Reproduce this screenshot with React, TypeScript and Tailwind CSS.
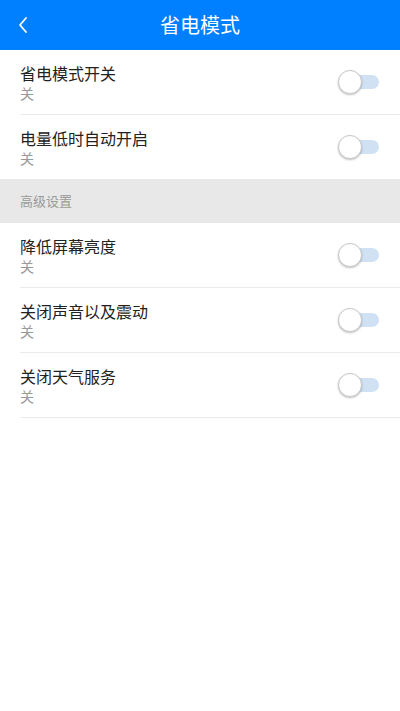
import React, { useState } from "react";

const font = { fontFamily: '"Noto Sans CJK SC", "Noto Sans", sans-serif' };

function Toggle({ on, onChange }: { on: boolean; onChange: () => void }) {
  return (
    <button type="button" onClick={onChange} className="relative w-[41px] h-[24px] mr-[21px] shrink-0">
      <span
        className={`absolute right-0 top-[5px] w-[36px] h-[14px] rounded-full ${on ? "bg-[#8cc0f5]" : "bg-[#cfe1f3]"}`}
      />
      <span
        className={`absolute top-0 w-[24px] h-[24px] rounded-full border border-[#c8c8c8] shadow-[0_1px_2px_rgba(0,0,0,0.25)] ${
          on ? "right-0 bg-[#0080ff] border-[#0080ff]" : "left-0 bg-white"
        }`}
      />
    </button>
  );
}

function Row({ title, last }: { title: string; last?: boolean }) {
  const [on, setOn] = useState(false);
  return (
    <div className={`ml-5 flex items-center ${last ? "h-[64px]" : "h-[65px] border-b border-[#ebebeb]"}`}>
      <div className="flex-1 flex flex-col">
        <div className="h-[22px] text-[16px] leading-[22px] text-[#222] overflow-hidden">{title}</div>
        <div className="h-[18px] text-[14px] leading-[18px] text-[#999] overflow-hidden">{on ? "开" : "关"}</div>
      </div>
      <Toggle on={on} onChange={() => setOn(!on)} />
    </div>
  );
}

export default function App() {
  return (
    <div className="w-[400px] h-[711px] bg-white" style={font}>
      <div className="h-[50px] bg-[#0080ff] flex items-center relative">
        <button type="button" className="w-[48px] h-[50px] flex items-center pl-[17px]">
          <svg width="12" height="18" viewBox="0 0 12 18" fill="none">
            <path d="M9 2 L3 9 L9 16" stroke="white" strokeWidth="1.8" strokeLinecap="round" strokeLinejoin="round" />
          </svg>
        </button>
        <h1 className="absolute left-1/2 -translate-x-1/2 text-white text-[20px] leading-[50px]">省电模式</h1>
      </div>

      <Row title="省电模式开关" />
      <Row title="电量低时自动开启" last />

      <div className="h-[44px] bg-[#e8e8e8] flex items-center pl-5">
        <span className="text-[13px] text-[#999]">高级设置</span>
      </div>

      <Row title="降低屏幕亮度" />
      <Row title="关闭声音以及震动" />
      <Row title="关闭天气服务" />
    </div>
  );
}
